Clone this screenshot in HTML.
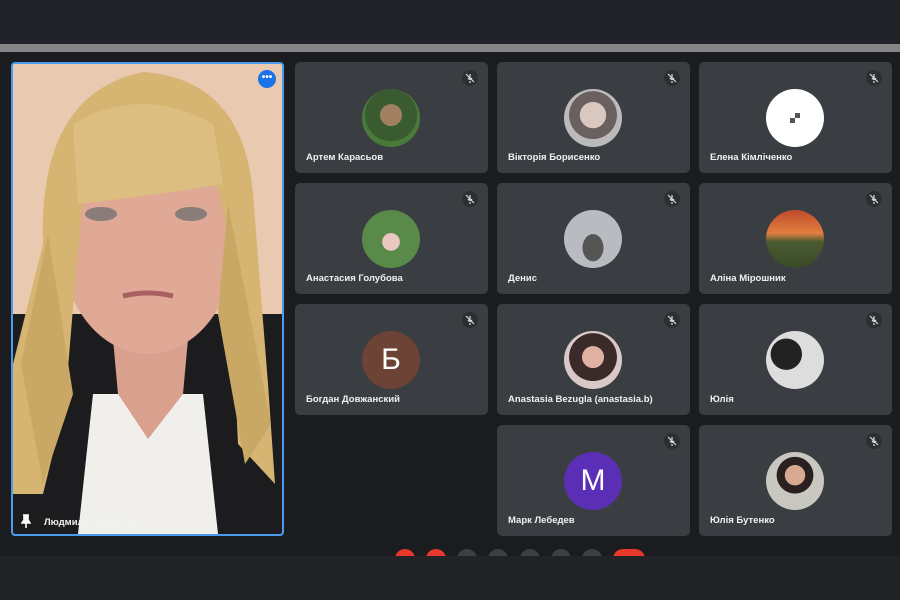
<!DOCTYPE html>
<html><head><meta charset="utf-8"><style>
*{margin:0;padding:0;box-sizing:border-box}
body{width:900px;height:600px;overflow:hidden;background:#1b1c20;font-family:"Liberation Sans",sans-serif;position:relative}
.top{position:absolute;left:0;top:0;width:900px;height:44px;background:#212328}
.strip{position:absolute;left:0;top:44px;width:900px;height:8px;background:#858585}
.bot{position:absolute;left:0;top:556px;width:900px;height:44px;background:#222327}
.t{position:absolute;width:193px;height:111px;background:#3a3d41;border-radius:5px}
.av{position:absolute;left:67px;top:27px;width:58px;height:58px;border-radius:50%;overflow:hidden;color:#fff;font-size:30px;text-align:center;line-height:58px}
.nm{position:absolute;left:11px;top:90px;color:#f1f1f1;font-size:9.5px;font-weight:bold;white-space:nowrap}
.mu{position:absolute;right:10px;top:8px;width:16px;height:16px;border-radius:50%;background:#2c2e31}
.mu svg{position:absolute;left:3px;top:3px}
.b{position:absolute;top:549px;width:20px;height:20px;border-radius:50%;background:#3c3f43}
</style></head><body>
<div class="top"></div><div class="strip"></div>
<div style="position:absolute;left:11px;top:62px;width:273px;height:474px;border:2px solid #4a9af0;border-radius:4px;overflow:hidden;background:#e6c6ae">
<svg width="269" height="470" viewBox="0 0 269 470">
<rect width="269" height="470" fill="#e9c9b0"/>
<rect x="0" y="250" width="269" height="220" fill="#1c1c1e"/>
<path d="M80 330 L190 330 L205 470 L65 470Z" fill="#f1efec"/>
<path d="M95 220 L180 220 L170 330 L135 375 L105 330Z" fill="#d9a08e"/>
<ellipse cx="135" cy="175" rx="88" ry="115" fill="#e0a996"/>
<path d="M30 180 Q25 30 130 8 Q230 15 240 130 L255 320 L262 420 L225 380 L215 170 Q205 120 195 95 Q150 120 70 135 L62 220 L52 340 L30 430 L0 430 L0 300 Z" fill="#d6b572"/>
<path d="M60 60 Q130 20 200 60 L210 120 Q150 130 65 140Z" fill="#dcbf80"/>
<path d="M35 170 L60 330 L30 420 L8 300Z" fill="#c9a765"/>
<path d="M215 140 L258 360 L232 400 L205 250Z" fill="#c9a765"/>
<ellipse cx="88" cy="150" rx="16" ry="7" fill="#8a7c78"/>
<ellipse cx="178" cy="150" rx="16" ry="7" fill="#8a7c78"/>
<path d="M110 232 Q135 226 160 232" stroke="#a86060" stroke-width="5" fill="none"/>
</svg>
<div style="position:absolute;right:6px;top:6px;width:18px;height:18px;border-radius:50%;background:#1a73e8;color:#fff;font-size:10px;text-align:center;line-height:15px;font-weight:bold">•••</div>
<svg style="position:absolute;left:8px;top:450px" width="10" height="14"><path d="M2 1h6M3 1v5l-2 3h8l-2-3V1M5 9v5" stroke="#fff" stroke-width="1.6" fill="#fff"/></svg>
<div style="position:absolute;left:31px;top:453px;color:#f1f1f1;font-size:9.5px;font-weight:bold">Людмила Горбатюк</div>
</div>

<div class="t" style="left:295px;top:62px"><div class="av" style="background:radial-gradient(circle at 50% 45%,#a08060 0 25%,#3a5a30 26% 60%,#4a7a3a 61%)"></div><div class="nm">Артем Карасьов</div><div class="mu"><svg width="10" height="10"><path d="M5 1v5M3 5q2 3 4 0M5 8v2M1 1l8 8" stroke="#ddd" stroke-width="1.2" fill="none"/></svg></div></div>
<div class="t" style="left:497px;top:62px"><div class="av" style="background:radial-gradient(circle at 50% 45%,#d8c8c0 0 30%,#6a6060 31% 55%,#bbb 56%)"></div><div class="nm">Вікторія Борисенко</div><div class="mu"><svg width="10" height="10"><path d="M5 1v5M3 5q2 3 4 0M5 8v2M1 1l8 8" stroke="#ddd" stroke-width="1.2" fill="none"/></svg></div></div>
<div class="t" style="left:699px;top:62px"><div class="av" style="background:#fff"><div style="position:absolute;left:24px;top:24px;width:10px;height:10px;background:conic-gradient(#555 0 25%,#fff 0 50%,#555 0 75%,#fff 0)"></div></div><div class="nm">Елена Кімліченко</div><div class="mu"><svg width="10" height="10"><path d="M5 1v5M3 5q2 3 4 0M5 8v2M1 1l8 8" stroke="#ddd" stroke-width="1.2" fill="none"/></svg></div></div>

<div class="t" style="left:295px;top:183px"><div class="av" style="background:radial-gradient(circle at 50% 55%,#e8c8c0 0 20%,#5a8a4a 21%)"></div><div class="nm">Анастасия Голубова</div><div class="mu"><svg width="10" height="10"><path d="M5 1v5M3 5q2 3 4 0M5 8v2M1 1l8 8" stroke="#ddd" stroke-width="1.2" fill="none"/></svg></div></div>
<div class="t" style="left:497px;top:183px"><div class="av" style="background:radial-gradient(ellipse at 50% 65%,#555 0 25%,#b8bcc0 26%)"></div><div class="nm">Денис</div><div class="mu"><svg width="10" height="10"><path d="M5 1v5M3 5q2 3 4 0M5 8v2M1 1l8 8" stroke="#ddd" stroke-width="1.2" fill="none"/></svg></div></div>
<div class="t" style="left:699px;top:183px"><div class="av" style="background:linear-gradient(#c04a2a,#e08040 40%,#4a5a30 55%,#3a4a28)"></div><div class="nm">Аліна Мірошник</div><div class="mu"><svg width="10" height="10"><path d="M5 1v5M3 5q2 3 4 0M5 8v2M1 1l8 8" stroke="#ddd" stroke-width="1.2" fill="none"/></svg></div></div>

<div class="t" style="left:295px;top:304px"><div class="av" style="background:#6d4336">Б</div><div class="nm">Богдан Довжанский</div><div class="mu"><svg width="10" height="10"><path d="M5 1v5M3 5q2 3 4 0M5 8v2M1 1l8 8" stroke="#ddd" stroke-width="1.2" fill="none"/></svg></div></div>
<div class="t" style="left:497px;top:304px"><div class="av" style="background:radial-gradient(circle at 50% 45%,#e0b0a0 0 25%,#3a2a2a 26% 55%,#d8c8c8 56%)"></div><div class="nm">Anastasia Bezugla (anastasia.b)</div><div class="mu"><svg width="10" height="10"><path d="M5 1v5M3 5q2 3 4 0M5 8v2M1 1l8 8" stroke="#ddd" stroke-width="1.2" fill="none"/></svg></div></div>
<div class="t" style="left:699px;top:304px"><div class="av" style="background:radial-gradient(circle at 35% 40%,#222 0 30%,#ddd 31%)"></div><div class="nm">Юлія</div><div class="mu"><svg width="10" height="10"><path d="M5 1v5M3 5q2 3 4 0M5 8v2M1 1l8 8" stroke="#ddd" stroke-width="1.2" fill="none"/></svg></div></div>

<div class="t" style="left:497px;top:425px"><div class="av" style="background:#5b2fb5">M</div><div class="nm">Марк Лебедев</div><div class="mu"><svg width="10" height="10"><path d="M5 1v5M3 5q2 3 4 0M5 8v2M1 1l8 8" stroke="#ddd" stroke-width="1.2" fill="none"/></svg></div></div>
<div class="t" style="left:699px;top:425px"><div class="av" style="background:radial-gradient(circle at 50% 40%,#d8a890 0 22%,#2a2020 23% 40%,#c8c8c0 41%)"></div><div class="nm">Юлія Бутенко</div><div class="mu"><svg width="10" height="10"><path d="M5 1v5M3 5q2 3 4 0M5 8v2M1 1l8 8" stroke="#ddd" stroke-width="1.2" fill="none"/></svg></div></div>

<div class="b" style="left:395px;background:#e8382c"></div>
<div class="b" style="left:426px;background:#e8382c"></div>
<div class="b" style="left:457px"></div>
<div class="b" style="left:488px"></div>
<div class="b" style="left:520px"></div>
<div class="b" style="left:551px"></div>
<div class="b" style="left:582px"></div>
<div class="b" style="left:613px;width:32px;border-radius:10px;background:#e8382c"></div>
<div class="bot"></div>
</body></html>
